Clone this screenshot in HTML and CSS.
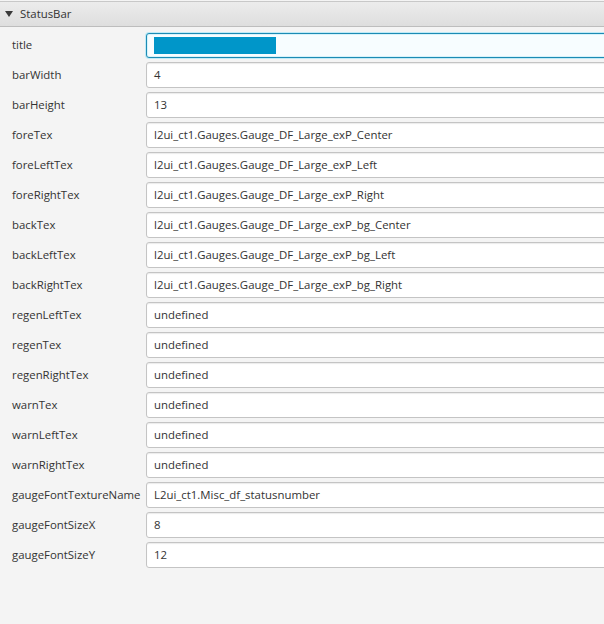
FILE: index.html
```html
<!DOCTYPE html>
<html>
<head>
<meta charset="utf-8">
<link rel="stylesheet" href="styles.css">
</head>
<body>
<div class="pane">
  <div class="header">
    <svg class="arrow" width="8" height="6" viewBox="0 0 8 6"><path d="M0 0 H8 L4 6 Z" fill="#3a3a3a"/></svg>
    <span class="header-title">StatusBar</span>
  </div>
  <div class="rows">
    <div class="row"><span class="label">title</span><div class="field focused"><span class="selection"></span></div></div>
    <div class="row"><span class="label">barWidth</span><div class="field">4</div></div>
    <div class="row"><span class="label">barHeight</span><div class="field">13</div></div>
    <div class="row"><span class="label">foreTex</span><div class="field">l2ui_ct1.Gauges.Gauge_DF_Large_exP_Center</div></div>
    <div class="row"><span class="label">foreLeftTex</span><div class="field">l2ui_ct1.Gauges.Gauge_DF_Large_exP_Left</div></div>
    <div class="row"><span class="label">foreRightTex</span><div class="field">l2ui_ct1.Gauges.Gauge_DF_Large_exP_Right</div></div>
    <div class="row"><span class="label">backTex</span><div class="field">l2ui_ct1.Gauges.Gauge_DF_Large_exP_bg_Center</div></div>
    <div class="row"><span class="label">backLeftTex</span><div class="field">l2ui_ct1.Gauges.Gauge_DF_Large_exP_bg_Left</div></div>
    <div class="row"><span class="label">backRightTex</span><div class="field">l2ui_ct1.Gauges.Gauge_DF_Large_exP_bg_Right</div></div>
    <div class="row"><span class="label">regenLeftTex</span><div class="field">undefined</div></div>
    <div class="row"><span class="label">regenTex</span><div class="field">undefined</div></div>
    <div class="row"><span class="label">regenRightTex</span><div class="field">undefined</div></div>
    <div class="row"><span class="label">warnTex</span><div class="field">undefined</div></div>
    <div class="row"><span class="label">warnLeftTex</span><div class="field">undefined</div></div>
    <div class="row"><span class="label">warnRightTex</span><div class="field">undefined</div></div>
    <div class="row"><span class="label">gaugeFontTextureName</span><div class="field">L2ui_ct1.Misc_df_statusnumber</div></div>
    <div class="row"><span class="label">gaugeFontSizeX</span><div class="field">8</div></div>
    <div class="row"><span class="label">gaugeFontSizeY</span><div class="field">12</div></div>
  </div>
</div>
</body>
</html>
```

FILE: styles.css
```css
html, body {
  margin: 0;
  padding: 0;
  background: #f4f4f4;
  overflow: hidden;
}
body {
  font-family: "Open Sans", "Noto Sans", sans-serif;
  font-size: 11.4px;
  color: #333333;
  width: 604px;
  height: 624px;
}
.pane {
  padding-top: 1px;
}
.header {
  height: 24px;
  border-top: 1px solid #c8c8c8;
  border-bottom: 1px solid #bdbdbd;
  background: linear-gradient(#ececec, #dedede);
  display: flex;
  align-items: center;
  padding-left: 5px;
  gap: 7px;
}
.arrow {
  display: block;
}
.header-title {
  color: #333;
  padding-bottom: 1px;
}
.rows {
  padding: 5px 0 0 12px;
  display: flex;
  flex-direction: column;
  gap: 4px;
}
.row {
  display: grid;
  grid-template-columns: 134px 1fr;
  align-items: center;
  height: 26px;
  margin-right: -10px;
}
.label {
  white-space: nowrap;
  padding-bottom: 2px;
}
.field {
  box-sizing: border-box;
  height: 26px;
  border: 1px solid #c4c4c4;
  border-radius: 3px;
  background: #ffffff;
  box-shadow: inset 0 1px 1px #ececec;
  display: flex;
  align-items: center;
  padding-left: 7px;
  padding-bottom: 1px;
  white-space: nowrap;
}
.field.focused {
  border: 1px solid #1c8bb4;
  box-shadow: 0 0 0 1px #bfeaf6, inset 0 0 0 1px #d6f3fb;
  background: #f7fdff;
  height: 25px;
  padding-bottom: 0;
}
.selection {
  display: block;
  width: 122px;
  height: 17px;
  background: #0096c9;
}
```
